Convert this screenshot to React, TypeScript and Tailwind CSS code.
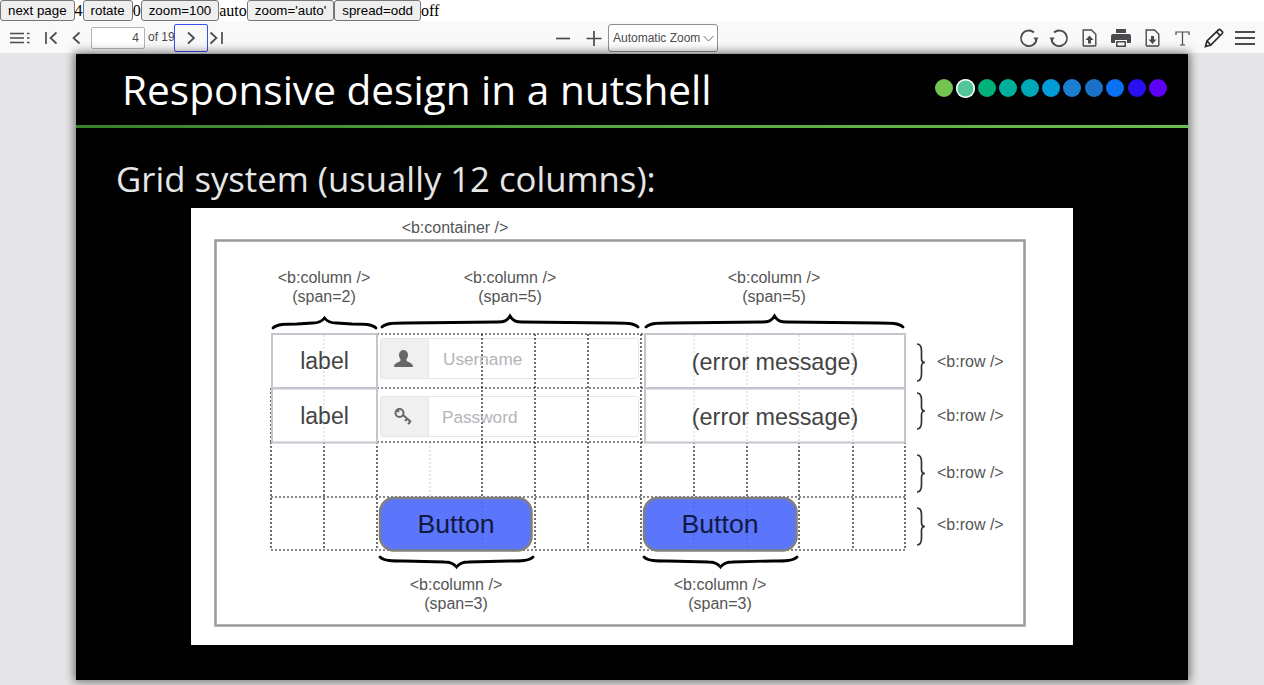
import React from 'react';

const dots = [
  'bg-[#72c34f]',
  'bg-[#52c59a]',
  'bg-[#00b27a]',
  'bg-[#00b09a]',
  'bg-[#00a9b8]',
  'bg-[#009cd8]',
  'bg-[#1b7dd0]',
  'bg-[#1a72c8]',
  'bg-[#0a72f2]',
  'bg-[#2a0ff0]',
  'bg-[#5c00fa]',
];

const darkCols = [482, 535, 588, 641];
const cellCols = [324, 694, 747, 799, 853];
const lowerCols = [271, 324, 377, 482, 535, 588, 641, 694, 747, 799, 853, 905];

const TopBtn = ({ children }: { children: React.ReactNode }) => (
  <button className="h-[21px] px-[7px] bg-[#efefef] border border-[#767676] rounded-[3px] text-[13.33px] leading-none text-black font-['Liberation_Sans',sans-serif]">
    {children}
  </button>
);

const IconBtn = ({ className, children }: { className?: string; children: React.ReactNode }) => (
  <div className={`flex items-center justify-center text-[#4a4a4f] ${className ?? ''}`}>{children}</div>
);

const Toolbar = () => (
  <div className="h-[32px] pt-[2px] bg-[#f9f9fa] flex items-center font-['Liberation_Sans',sans-serif] shrink-0">
    <IconBtn className="ml-[10px] w-[20px]">
      <svg width="20" height="14" viewBox="0 0 20 14" fill="none" stroke="currentColor" strokeWidth="1.6">
        <path d="M0 2.5h14M0 7h14M0 11.5h14M17 2.5h2.5M17 7h2.5M17 11.5h2.5" />
      </svg>
    </IconBtn>
    <IconBtn className="ml-[15px] w-[13px]">
      <svg width="13" height="14" viewBox="0 0 13 14" fill="none" stroke="currentColor" strokeWidth="1.7">
        <path d="M1 1v12M11.5 1.5 5.5 7l6 5.5" />
      </svg>
    </IconBtn>
    <IconBtn className="ml-[13px] w-[10px]">
      <svg width="9" height="14" viewBox="0 0 9 14" fill="none" stroke="currentColor" strokeWidth="1.7">
        <path d="M7.5 1.5 1.5 7l6 5.5" />
      </svg>
    </IconBtn>
    <input
      readOnly
      value="4"
      className="ml-[10px] w-[54px] h-[22px] bg-white border border-[#b4b4b8] rounded-[2px] text-right pr-[5px] text-[12px] text-[#4a4a4f] outline-none"
    />
    <span className="ml-[3px] w-[26px] text-[12px] text-[#4a4a4f] whitespace-nowrap -mt-[2px]">of 19</span>
    <div className="w-[34px] h-[28px] border border-[#3a4cf0] rounded-[2px] flex items-center justify-center text-[#4a4a4f]">
      <svg width="10" height="14" viewBox="0 0 10 14" fill="none" stroke="currentColor" strokeWidth="1.7">
        <path d="M2 1.5 8 7l-6 5.5" />
      </svg>
    </div>
    <IconBtn className="ml-[1px] w-[14px]">
      <svg width="14" height="14" viewBox="0 0 14 14" fill="none" stroke="currentColor" strokeWidth="1.7">
        <path d="M1.5 1.5 7.5 7l-6 5.5M13 1v12" />
      </svg>
    </IconBtn>
    <IconBtn className="ml-[332px] w-[16px]">
      <svg width="16" height="16" viewBox="0 0 16 16" fill="none" stroke="currentColor" strokeWidth="1.7">
        <path d="M1 8.5h14" />
      </svg>
    </IconBtn>
    <IconBtn className="ml-[15px] w-[16px]">
      <svg width="16" height="16" viewBox="0 0 16 16" fill="none" stroke="currentColor" strokeWidth="1.7">
        <path d="M0.5 8.5h15M8 1v15" />
      </svg>
    </IconBtn>
    <div className="ml-[6px] w-[110px] h-[28px] bg-white border border-[#8f8f93] rounded-[3px] flex items-center pl-[4px] text-[12px] text-[#4a4a4f] whitespace-nowrap">
      <span>Automatic Zoom</span>
      <svg className="ml-[3px]" width="11" height="7" viewBox="0 0 11 7" fill="none" stroke="#6a6a6f" strokeWidth="1">
        <path d="M.5 1 5.5 6l5-5" />
      </svg>
    </div>
    <IconBtn className="ml-[301px] w-[20px]">
      <svg width="20" height="20" viewBox="0 0 20 20" fill="none" stroke="currentColor" strokeWidth="1.8">
        <path d="M17.5 11.5A7.8 7.8 0 1 1 15 4.5" />
        <path d="M19.6 9.5h-5.2l2.6 4z" fill="currentColor" stroke="none" />
      </svg>
    </IconBtn>
    <IconBtn className="ml-[10px] w-[20px]">
      <svg width="20" height="20" viewBox="0 0 20 20" fill="none" stroke="currentColor" strokeWidth="1.8">
        <path d="M2.5 11.5A7.8 7.8 0 1 0 5 4.5" />
        <path d="M.4 9.5h5.2l-2.6 4z" fill="currentColor" stroke="none" />
      </svg>
    </IconBtn>
    <IconBtn className="ml-[13px] w-[15px]">
      <svg width="15" height="18" viewBox="0 0 15 18" fill="none" stroke="currentColor" strokeWidth="1.4">
        <path d="M1.2 1h8.3l4.3 4.3V16a1 1 0 0 1-1 1H2.2a1 1 0 0 1-1-1z" />
        <path d="M7.5 6.5 11.5 11H9v3.5H6V11H3.5z" fill="currentColor" stroke="none" />
      </svg>
    </IconBtn>
    <IconBtn className="ml-[14px] w-[20px]">
      <svg width="20" height="18" viewBox="0 0 20 18" fill="currentColor">
        <path d="M5 0h10v4H5zM2 5h16a2 2 0 0 1 2 2v6a1 1 0 0 1-1 1h-3v-3H4v3H1a1 1 0 0 1-1-1V7a2 2 0 0 1 2-2z" />
        <path d="M5 12h10v6H5z" />
        <path d="M6.5 13.5h7v3h-7z" fill="#f9f9fa" />
      </svg>
    </IconBtn>
    <IconBtn className="ml-[14px] w-[15px]">
      <svg width="15" height="18" viewBox="0 0 15 18" fill="none" stroke="currentColor" strokeWidth="1.4">
        <path d="M1.2 1h8.3l4.3 4.3V16a1 1 0 0 1-1 1H2.2a1 1 0 0 1-1-1z" />
        <path d="M7.5 15 11.5 10.5H9V7H6v3.5H3.5z" fill="currentColor" stroke="none" />
      </svg>
    </IconBtn>
    <IconBtn className="ml-[15px] w-[15px]">
      <svg width="15" height="15" viewBox="0 0 15 15" fill="none" stroke="currentColor" strokeWidth="1.2">
        <path d="M1 4V1h13v3M7.5 1v13M5 14h5" />
      </svg>
    </IconBtn>
    <IconBtn className="ml-[14px] w-[20px]">
      <svg width="20" height="20" viewBox="0 0 20 20" fill="none" stroke="#2a2a2e" strokeWidth="1.7">
        <path d="M1.5 18.5 3 13 14.5 1.8a1.5 1.5 0 0 1 2 0l1.7 1.7a1.5 1.5 0 0 1 0 2L6.8 17z" />
        <path d="M12.5 3.8l3.7 3.7M3 13l3.8 4" />
      </svg>
    </IconBtn>
    <IconBtn className="ml-[11px] w-[20px]">
      <svg width="20" height="16" viewBox="0 0 20 16" fill="none" stroke="currentColor" strokeWidth="2">
        <path d="M0 2h20M0 8h20M0 14h20" />
      </svg>
    </IconBtn>
  </div>
);

// free canvas: coordinates are the page's, offset by the picture's corner
const DiagramText = ({ x, y, w, className, children }: { x: number; y: number; w: number; className: string; children: React.ReactNode }) => (
  <div
    className={`absolute text-center whitespace-nowrap ${className}`}
    style={{ left: x - 191, top: y - 208, width: w }}
  >
    {children}
  </div>
);

const brace = (x1: number, x2: number, y: number, dir: number, tip: number) => {
  const m = (x1 + x2) / 2;
  return `M${x1} ${y + 5 * dir}C${x1 + 4} ${y + 1 * dir} ${x1 + 12} ${y + 1 * dir} ${x1 + 24} ${y + 1 * dir}L${m - 12} ${y}C${m - 6} ${y} ${m - 3} ${y - 1 * dir} ${m} ${y - tip * dir}C${m + 3} ${y - 1 * dir} ${m + 6} ${y} ${m + 12} ${y}L${x2 - 24} ${y + 1 * dir}C${x2 - 12} ${y + 1 * dir} ${x2 - 4} ${y + 1 * dir} ${x2} ${y + 5 * dir}`;
};

const sideBrace = (y1: number, y2: number) => {
  const m = (y1 + y2) / 2;
  return `M917 ${y1}C921 ${y1} 921.5 ${y1 + 3} 921.5 ${y1 + 7}L921.5 ${m - 4}C921.5 ${m - 1} 923 ${m} 925 ${m}C923 ${m} 921.5 ${m + 1} 921.5 ${m + 4}L921.5 ${y2 - 7}C921.5 ${y2 - 3} 921 ${y2} 917 ${y2}`;
};

const smallText = "text-[16px] leading-[19px] text-[#555]";

const Diagram = () => (
  <div className="relative w-[882px] h-[437px] bg-white mt-[4px] ml-[115px] font-['Liberation_Sans',sans-serif] text-[#444]">
    <svg className="absolute left-0 top-0" width="882" height="437" viewBox="191 208 882 437" fill="none">
      <rect x="215.5" y="240.5" width="809" height="385" stroke="#999" strokeWidth="2.5" />
      {[338.5, 396.5].map((y) => (
        <g key={y}>
          <rect x="380.5" y={y} width="258" height="40" rx="3" fill="#fff" stroke="#e6e6e6" />
          <path d={`M383.5 ${y}H428.5V${y + 40}H383.5a3 3 0 0 1-3-3V${y + 3}a3 3 0 0 1 3-3z`} fill="#f0f0f0" stroke="#e6e6e6" />
        </g>
      ))}
      <path d="M403.5 350a4.5 5 0 0 1 4.5 5c0 3-2 4-1.5 5.5 1 2 6.5 2 6.5 6.5h-19c0-4.5 5.5-4.5 6.500-6.5.5-1.500-1.500-2.500-1.500-5.500a4.500 5 0 0 1 4.500-5z" fill="#666" />
      <path d="M397 410l2 2M403 415l8 7M407 419l-2 2M410 422l-2 2" stroke="#666" strokeWidth="2" />
      <circle cx="399.5" cy="413" r="4" stroke="#666" strokeWidth="2" />
      {/* guide lines: faint behind the drawn cells, dark in the open rows */}
      {cellCols.map((x) => (
        <path key={x} d={`M${x} 335V442`} stroke="#dcdcdc" strokeWidth="1.3" strokeDasharray="2 2" />
      ))}
      <path d="M430 442V550" stroke="#d8d8d8" strokeWidth="1.3" strokeDasharray="2 2" />
      {darkCols.map((x) => (
        <path key={x} d={`M${x} 334V442`} stroke="#222" strokeWidth="1.3" strokeDasharray="2 2" />
      ))}
      {lowerCols.map((x) => (
        <path key={x} d={`M${x} 442V550`} stroke="#222" strokeWidth="1.3" strokeDasharray="2 2" />
      ))}
      <path d="M271 388V442M905 334V442" stroke="#222" strokeWidth="1.3" strokeDasharray="2 2" />
      <path d="M377 334H645M377 388H645M377 442H645M271 497H905M271 550H905" stroke="#111" strokeWidth="1.2" strokeDasharray="2 2" />
      <rect x="272" y="334" width="105" height="54" stroke="#c3c6cc" strokeWidth="2" />
      <rect x="272" y="388.5" width="105" height="54" stroke="#c3c6cc" strokeWidth="2" />
      <rect x="645" y="334" width="260" height="54" stroke="#c3c6cc" strokeWidth="2" />
      <rect x="645" y="388.5" width="260" height="54" stroke="#c3c6cc" strokeWidth="2" />
      <rect x="380" y="498" width="151.5" height="52.5" rx="14" fill="#4f6bfb" fillOpacity="0.93" stroke="#808080" strokeWidth="2.5" />
      <rect x="644" y="498" width="152.5" height="52.5" rx="14" fill="#4f6bfb" fillOpacity="0.93" stroke="#808080" strokeWidth="2.5" />
      <g stroke="#000" strokeWidth="2.8" strokeLinecap="round">
        <path d={brace(273, 376, 323, 1, 5)} />
        <path d={brace(382, 638, 322, 1, 6)} />
        <path d={brace(646, 903, 322, 1, 6)} />
        <path d={brace(380, 533, 562, -1, 5)} />
        <path d={brace(644, 797, 562, -1, 5)} />
      </g>
      <g stroke="#333" strokeWidth="1.7">
        <path d={sideBrace(344, 381)} />
        <path d={sideBrace(393, 429)} />
        <path d={sideBrace(455, 492)} />
        <path d={sideBrace(508, 545)} />
      </g>
    </svg>
    <DiagramText x={380} y={218} w={150} className={smallText}>&lt;b:container /&gt;</DiagramText>
    <DiagramText x={250} y={268} w={148} className={smallText}>&lt;b:column /&gt;<br />(span=2)</DiagramText>
    <DiagramText x={436} y={268} w={148} className={smallText}>&lt;b:column /&gt;<br />(span=5)</DiagramText>
    <DiagramText x={700} y={268} w={148} className={smallText}>&lt;b:column /&gt;<br />(span=5)</DiagramText>
    <DiagramText x={382} y={575} w={148} className={smallText}>&lt;b:column /&gt;<br />(span=3)</DiagramText>
    <DiagramText x={646} y={575} w={148} className={smallText}>&lt;b:column /&gt;<br />(span=3)</DiagramText>
    <DiagramText x={272} y={348} w={105} className="text-[23px] leading-[27px]">label</DiagramText>
    <DiagramText x={272} y={403} w={105} className="text-[23px] leading-[27px]">label</DiagramText>
    <DiagramText x={645} y={349} w={260} className="text-[23.4px] leading-[27px]">(error message)</DiagramText>
    <DiagramText x={645} y={404} w={260} className="text-[23.4px] leading-[27px]">(error message)</DiagramText>
    <DiagramText x={443} y={349} w={90} className="text-[17.2px] leading-[20px] text-left text-[#b4b4b8]">Username</DiagramText>
    <DiagramText x={442} y={407} w={90} className="text-[17.2px] leading-[20px] text-left text-[#b4b4b8]">Password</DiagramText>
    <DiagramText x={380} y={510} w={152} className="text-[26.7px] leading-[29px] text-[#111a44]">Button</DiagramText>
    <DiagramText x={644} y={510} w={152} className="text-[26.7px] leading-[29px] text-[#111a44]">Button</DiagramText>
    {[352, 406, 463, 515].map((y) => (
      <DiagramText key={y} x={937} y={y} w={70} className={`${smallText} text-left`}>&lt;b:row /&gt;</DiagramText>
    ))}
  </div>
);

export default function App() {
  return (
    <div className="w-[1264px] h-[685px] overflow-hidden flex flex-col bg-white">
      <div className="h-[21px] flex items-center text-[16px] text-black font-['Liberation_Serif',serif] shrink-0">
        <TopBtn>next page</TopBtn>
        <span>4</span>
        <TopBtn>rotate</TopBtn>
        <span>0</span>
        <TopBtn>zoom=100</TopBtn>
        <span>auto</span>
        <TopBtn>zoom='auto'</TopBtn>
        <TopBtn>spread=odd</TopBtn>
        <span>off</span>
      </div>
      <Toolbar />
      <div className="flex-1 bg-[#e6e6e8] pt-px min-h-0">
        <div className="w-[1112px] h-[626px] ml-[76px] bg-black shadow-[0_0_9px_2px_rgba(0,0,0,0.5)]">
          <div className="h-[71px] flex items-center justify-between pl-[46px] pr-[21px]">
            <h1 className="text-[40.6px] font-medium leading-[71px] text-white font-['Open_Sans',sans-serif]">Responsive design in a nutshell</h1>
            <div className="flex items-center gap-[3.4px] -mt-[3px]">
              {dots.map((dot, i) => (
                <span
                  key={dot}
                  className={`rounded-full ${dot} ${i === 1 ? 'w-[19px] h-[19px] -mx-[0.5px] ring-[1.5px] ring-inset ring-white' : 'w-[18px] h-[18px]'}`}
                />
              ))}
            </div>
          </div>
          <div className="h-[3px] bg-gradient-to-r from-[#3a7f2b] via-[#58a842] to-[#69bd4c]" />
          <h2 className="mt-[26px] ml-[40px] text-[34.7px] leading-[50px] text-[#e6e6e6] font-['Open_Sans',sans-serif]">Grid system (usually 12 columns):</h2>
          <Diagram />
        </div>
      </div>
    </div>
  );
}
